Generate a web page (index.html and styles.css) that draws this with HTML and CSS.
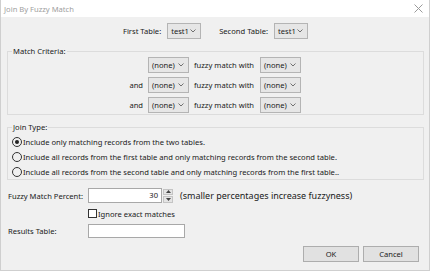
FILE: index.html
```html
<!DOCTYPE html>
<html lang="en">
<head>
<meta charset="UTF-8">
<title>Join By Fuzzy Match</title>
<link rel="stylesheet" href="styles.css">
</head>
<body>
  <div class="window">
    <div class="titlebar">
      <span class="title">Join By Fuzzy Match</span>
      <svg class="close" width="9" height="9" viewBox="0 0 9 9"><path d="M0.5 0.5L8.5 8.5M8.5 0.5L0.5 8.5"/></svg>
    </div>
    <div class="client">
      <div class="tables">
        <span>First Table:</span>
        <div class="combo table-combo"><span>test1</span><svg class="chev" width="6" height="4" viewBox="0 0 6 4"><path d="M0.5 0.5L3 3L5.5 0.5"/></svg></div>
        <span class="second-label">Second Table:</span>
        <div class="combo table-combo"><span>test1</span><svg class="chev" width="6" height="4" viewBox="0 0 6 4"><path d="M0.5 0.5L3 3L5.5 0.5"/></svg></div>
      </div>

      <fieldset class="group criteria">
        <legend>Match Criteria:</legend>
        <div class="criteria-grid">
          <span class="and"></span>
          <div class="combo"><span>(none)</span><svg class="chev" width="6" height="4" viewBox="0 0 6 4"><path d="M0.5 0.5L3 3L5.5 0.5"/></svg></div>
          <span>fuzzy match with</span>
          <div class="combo"><span>(none)</span><svg class="chev" width="6" height="4" viewBox="0 0 6 4"><path d="M0.5 0.5L3 3L5.5 0.5"/></svg></div>

          <span class="and">and</span>
          <div class="combo"><span>(none)</span><svg class="chev" width="6" height="4" viewBox="0 0 6 4"><path d="M0.5 0.5L3 3L5.5 0.5"/></svg></div>
          <span>fuzzy match with</span>
          <div class="combo"><span>(none)</span><svg class="chev" width="6" height="4" viewBox="0 0 6 4"><path d="M0.5 0.5L3 3L5.5 0.5"/></svg></div>

          <span class="and">and</span>
          <div class="combo"><span>(none)</span><svg class="chev" width="6" height="4" viewBox="0 0 6 4"><path d="M0.5 0.5L3 3L5.5 0.5"/></svg></div>
          <span>fuzzy match with</span>
          <div class="combo"><span>(none)</span><svg class="chev" width="6" height="4" viewBox="0 0 6 4"><path d="M0.5 0.5L3 3L5.5 0.5"/></svg></div>
        </div>
      </fieldset>

      <fieldset class="group join">
        <legend>Join Type:</legend>
        <div class="radio-row"><span class="radio checked"></span>Include only matching records from the two tables.</div>
        <div class="radio-row"><span class="radio"></span>Include all records from the first table and only matching records from the second table.</div>
        <div class="radio-row"><span class="radio"></span>Include all records from the second table and only matching records from the first table..</div>
      </fieldset>

      <div class="form">
        <span class="label">Fuzzy Match Percent:</span>
        <div class="percent-row">
          <div class="input percent">30</div>
          <div class="spinner">
            <span class="spin up"><svg width="5" height="3" viewBox="0 0 5 3"><path d="M0 3L2.5 0L5 3Z"/></svg></span>
            <span class="spin down"><svg width="5" height="3" viewBox="0 0 5 3"><path d="M0 0L2.5 3L5 0Z"/></svg></span>
          </div>
          <span class="hint">(smaller percentages increase fuzzyness)</span>
        </div>

        <span></span>
        <div class="check-row"><span class="checkbox"></span>Ignore exact matches</div>

        <span class="label">Results Table:</span>
        <div class="input results"></div>
      </div>

      <div class="buttons">
        <div class="button">OK</div>
        <div class="button">Cancel</div>
      </div>
    </div>
  </div>
</body>
</html>
```

FILE: styles.css
```css
body {
  margin: 0;
  background: #fff;
  font-family: "Noto Sans", sans-serif;
  font-size: 7.6px;
  color: #1a1a1a;
  white-space: nowrap;
}
.window {
  width: 430px;
  height: 271px;
  box-sizing: border-box;
  border: 1px solid #cfcfcf;
  border-top: none;
  display: flex;
  flex-direction: column;
  background: #f0f0f0;
}
.titlebar {
  height: 17px;
  background: #fff;
  display: flex;
  align-items: center;
  justify-content: space-between;
  padding: 0 6px 0 3px;
}
.title {
  color: #a0a0a0;
}
.close {
  stroke: #9a9a9a;
  stroke-width: 1;
  fill: none;
}
.client {
  flex: 1;
  padding: 6px 5px 0 6px;
  display: flex;
  flex-direction: column;
}

/* top row with the two table pickers */
.tables {
  display: flex;
  justify-content: center;
  align-items: center;
  gap: 6px;
}
.second-label {
  margin-left: 12px;
}
.combo {
  height: 16px;
  box-sizing: border-box;
  border: 1px solid #b4b4b4;
  background: #e6e6e6;
  display: flex;
  align-items: center;
  justify-content: space-between;
  padding: 0 4px 0 3px;
}
.table-combo {
  width: 34px;
}
.chev {
  fill: none;
  stroke: #707070;
  stroke-width: 1;
}

/* group boxes */
.group {
  margin: 6px 0 0;
  border: 1px solid #dcdcdc;
  padding: 0 4px 1px;
}
.group legend {
  padding: 0 1px;
  line-height: 12px;
}
.criteria-grid {
  display: grid;
  grid-template-columns: 131px 41px 61px 41px;
  grid-auto-rows: 16px;
  gap: 4px 5px;
  align-items: center;
}
.and {
  text-align: right;
}
.join {
  margin-top: 6px;
  padding-top: 1px;
  padding-bottom: 0;
}
.radio-row {
  height: 15px;
  display: flex;
  align-items: center;
}
.radio {
  width: 10px;
  height: 10px;
  box-sizing: border-box;
  border: 1px solid #333;
  border-radius: 50%;
  margin-right: 1px;
  display: flex;
  align-items: center;
  justify-content: center;
}
.radio.checked::after {
  content: "";
  width: 4px;
  height: 4px;
  border-radius: 50%;
  background: #222;
}

/* lower form */
.form {
  display: grid;
  grid-template-columns: 80px auto;
  grid-template-rows: 15px 11px 14px;
  row-gap: 5px;
  align-items: center;
  margin: 8px 0 0 1px;
}
.percent-row {
  display: flex;
  align-items: center;
  height: 100%;
}
.input {
  height: 100%;
  box-sizing: border-box;
  border: 1px solid #a8a8a8;
  background: #fff;
}
.percent {
  width: 74px;
  text-align: right;
  padding-right: 3px;
  line-height: 13px;
}
.spinner {
  width: 10px;
  height: 14px;
  margin-left: 1px;
  display: flex;
  flex-direction: column;
  gap: 1px;
}
.spin {
  flex: 1;
  background: #e4e4e4;
  border: 1px solid #c4c4c4;
  display: flex;
  align-items: center;
  justify-content: center;
}
.spin svg {
  fill: #444;
}
.hint {
  margin-left: 7px;
  font-size: 9px;
}
.check-row {
  display: flex;
  align-items: center;
}
.checkbox {
  width: 9px;
  height: 9px;
  box-sizing: border-box;
  border: 1px solid #333;
  background: #fff;
  margin-right: 1px;
}
.results {
  width: 97px;
}
.buttons {
  display: flex;
  justify-content: flex-end;
  gap: 4px;
  margin: 8px 5px 0 0;
}
.button {
  width: 56px;
  height: 16px;
  box-sizing: border-box;
  border: 1px solid #adadad;
  background: #e1e1e1;
  display: flex;
  align-items: center;
  justify-content: center;
}
```
